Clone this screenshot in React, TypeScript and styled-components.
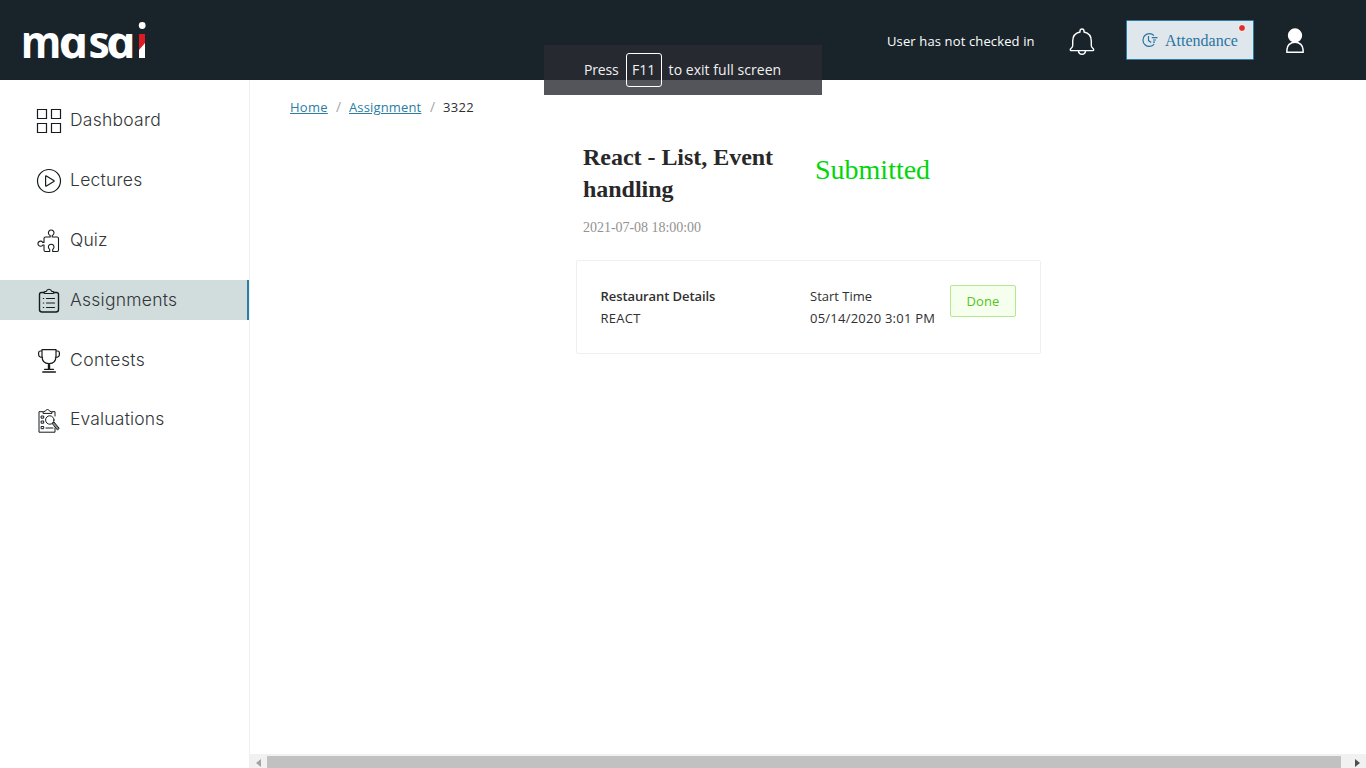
import React from "react";
import styled, { createGlobalStyle } from "styled-components";

const GlobalStyle = createGlobalStyle`
  * { box-sizing: border-box; }
  html, body { margin: 0; height: 100%; overflow: hidden; background: #fff; }
  body { font-family: "Open Sans", "Noto Sans", sans-serif; color: #303030; }
  svg { display: block; flex: none; }
`;

const Page = styled.div`
  position: relative;
  width: 1366px;
  height: 768px;
  display: flex;
  flex-direction: column;
`;

const Header = styled.header`
  height: 80px;
  flex: none;
  display: flex;
  align-items: center;
  background: #19242a;
`;

const HeaderActions = styled.div`
  margin-left: auto;
  display: flex;
  align-items: center;
  padding-right: 61px;
`;

const Label = styled.span<{ $size?: number; $spacing?: number; $weight?: number; $color?: string }>`
  font-size: ${(p) => p.$size ?? 13}px;
  letter-spacing: ${(p) => p.$spacing ?? 0}px;
  font-weight: ${(p) => p.$weight ?? 400};
  color: ${(p) => p.$color ?? "inherit"};
  white-space: nowrap;
`;

const CheckInStatus = styled(Label)`
  width: 148px;
  margin-right: 34px;
  padding-top: 1px;
`;

const AttendanceButton = styled.button`
  position: relative;
  width: 128px;
  height: 40px;
  margin: 0 31px;
  padding: 1px 0 0 14px;
  display: flex;
  align-items: center;
  gap: 7px;
  border: 1px solid #2a7da5;
  border-radius: 1px;
  background: #dfe7ed;
  color: #2a759f;
  font: 16px "Liberation Serif", serif;

  svg { margin-top: -2px; }
`;

const AlertDot = styled.i`
  position: absolute;
  top: 3px;
  right: 7px;
  width: 8px;
  height: 8px;
  border: 1px solid #fff;
  border-radius: 50%;
  background: #dc3030;
`;

const Body = styled.div`
  flex: 1;
  min-height: 0;
  display: flex;
`;

const Sidebar = styled.nav`
  width: 250px;
  flex: none;
  padding-top: 20px;
  display: flex;
  flex-direction: column;
  gap: 20px;
  border-right: 1px solid #efeff3;
`;

const NavItem = styled.a<{ $active?: boolean; $short?: boolean }>`
  height: ${(p) => (p.$short ? 39 : 40)}px;
  display: flex;
  align-items: center;
  padding-left: 36px;
  gap: 8px;
  background: ${(p) => (p.$active ? "#d1dcdd" : "transparent")};
  border-right: 2px solid ${(p) => (p.$active ? "#2a7da5" : "transparent")};
  color: #323638;
  font-family: Inter, sans-serif;

  svg { margin-top: 2px; }
  span { padding-bottom: 2px; }
`;

const Content = styled.main`
  flex: 1;
  min-width: 0;
  display: flex;
  flex-direction: column;
`;

const Breadcrumb = styled.div`
  display: flex;
  padding: 17px 0 0 40px;
  height: 61px;
  line-height: 20px;
`;

const Crumb = styled(Label)<{ $width: number }>`
  width: ${(p) => p.$width}px;
`;

const CrumbLink = styled(Crumb)`
  color: #2a7da5;
  text-decoration: underline;
  text-underline-offset: 1px;
`;

const Slash = styled.span`
  width: 21px;
  text-align: center;
  font-size: 14px;
  color: #a5a5a5;
`;

const Assignment = styled.section`
  width: 465px;
  margin-left: 326px;
`;

const TitleRow = styled.div`
  display: flex;
  padding-left: 7px;
  height: 64px;
  font-family: "Liberation Serif", serif;
`;

const Title = styled.h1`
  width: 232px;
  margin: 0;
  font-size: 24px;
  line-height: 32px;
  font-weight: 700;
  letter-spacing: -0.03px;
  color: #282828;
`;

const Submitted = styled.div`
  font-size: 28px;
  line-height: 58px;
  color: #00d60b;
`;

const Timestamp = styled.div`
  padding: 13px 0 0 7px;
  height: 55px;
  font: 14px/20px "Liberation Serif", serif;
  letter-spacing: -0.03px;
  color: #929292;
`;

const Card = styled.div`
  height: 94px;
  display: flex;
  padding: 24px 0 0 23.5px;
  border: 1px solid #efefef;
  border-radius: 2px;
`;

const CardColumn = styled.div<{ $width: number }>`
  width: ${(p) => p.$width}px;
  display: flex;
  flex-direction: column;
  line-height: 22px;
`;

const DoneButton = styled.button`
  width: 66px;
  height: 32px;
  padding: 0;
  border: 1px solid #b2eb8c;
  border-radius: 2px;
  background: #f6ffed;
  color: #52c41a;
  font-family: inherit;
`;

const ScrollBar = styled.div`
  margin-top: auto;
  height: 14px;
  display: flex;
  align-items: center;
  background: #f1f1f1;
`;

const ScrollThumb = styled.div`
  flex: 1;
  align-self: stretch;
  margin: 2px 0 0;
  background: #c1c1c1;
`;

const ScrollArrow = styled.div<{ $width: number }>`
  width: ${(p) => p.$width}px;
  display: flex;
  justify-content: center;
  padding-top: 3px;
`;

const FullscreenHint = styled.div`
  position: absolute;
  left: 544px;
  top: 45px;
  width: 278px;
  height: 50px;
  display: flex;
  align-items: center;
  padding-left: 40px;
  background: rgba(41, 43, 50, 0.8);
  color: #f0f0f0;

  span { padding-bottom: 1px; }
`;

const KeyCap = styled.span`
  width: 36px;
  height: 34px;
  margin: 0 7px;
  display: flex;
  align-items: center;
  justify-content: center;
  border: 1px solid #fff;
  border-radius: 3px;
`;

const Logo = () => (
  <svg width="150" height="80" fill="#fff" fontFamily="Open Sans" fontWeight="700" fontSize="44">
    <text transform="translate(20.8 58) scale(.94 1)">m</text>
    <text transform="translate(61.3 58) scale(1.15 1) skewX(12)" fontStyle="italic">a</text>
    <text transform="translate(88.5 58) scale(.97 1)">s</text>
    <text transform="translate(108.8 58) scale(1.15 1) skewX(12)" fontStyle="italic">a</text>
    <path d="M139 34h6v24h-6z" />
    <circle cx="142.2" cy="25.5" r="3.4" />
    <path d="M139 34h6v9l-6 7z" fill="#dc1b22" />
  </svg>
);

const Icon = ({ children }: { children: React.ReactNode }) => (
  <svg width="26" height="26" viewBox="0 0 26 26" fill="none" stroke="#171b1d" strokeWidth="1.2" strokeLinejoin="round" strokeLinecap="round">
    {children}
  </svg>
);

const DashboardIcon = () => (
  <Icon><path strokeLinejoin="miter" strokeWidth="1.2" d="M1.500 1.500h9v9h-9zM15.500 1.500h9v9h-9zM1.500 15.500h9v9h-9zM15.500 15.500h9v9h-9z" /></Icon>
);
const LecturesIcon = () => (
  <Icon><circle cx="13" cy="13" r="11.500" /><path d="M9.600 8.400v9.200q0 .8.8.4l7.400-4.400q.8-.6 0-1.100L10.400 8q-.8-.4-.8.4z" /></Icon>
);
const QuizIcon = () => (
  <Icon>
    <path
      strokeWidth="1.100"
      d="M9.500 9h4.700V7.400a2.800 2.800 0 1 1 2 0V9h4.800q1.500 0 1.500 1.500V22q0 1.500-1.500 1.500h-4.300V21.400a2.800 2.800 0 1 0-3 0v2.100H9.500Q8 23.500 8 22v-5H6.800a2.600 2.600 0 1 1 0-2.600H8v-3.900Q8 9 9.500 9z"
    />
  </Icon>
);
const AssignmentsIcon = () => (
  <Icon>
    <path strokeWidth="1.400" d="M8 4.500H5.500q-2 0-2 2v15q0 2.500 2.500 2.500h14q2.500 0 2.500-2.500v-15q0-2-2-2H18" />
    <path d="M8 4.500q0-1.200 2.300-1.200a2.800 2.800 0 0 1 5.400 0Q18 3.300 18 4.500q0 1-1 1H9q-1 0-1-1z" />
    <path d="M10.500 10.500h8M10.500 15h8M10.500 19.500h8M7.300 10.500h.4M7.300 15h.4M7.300 19.500h.4" />
  </Icon>
);
const ContestsIcon = () => (
  <Icon>
    <path d="M6 1.700h14v6q0 8-7 8t-7-8zM6 3H4.500Q2.600 3 2.600 5v1.200q0 3.200 4 3.300M20 3h1.500q1.900 0 1.900 2v1.200q0 3.200-4 3.300M12.400 15.700v5.200M13.600 15.700v5.200M8.500 21.300h9" />
    <path strokeWidth="1.500" d="M6.800 24h12.600" />
  </Icon>
);
const EvaluationsIcon = () => (
  <Icon>
    <g strokeWidth="1">
      <path d="M7 3.700H3v20.500h16V20M16 3.700h3V8" />
      <path d="M7 5V4.200l2.700-1.400a1.900 1.900 0 0 1 3.600 0L16 4.200V5z" />
      <path strokeLinejoin="miter" d="M5.500 8h2.200v2.200H5.500zM5.500 13h2.200v2.200H5.500zM5.500 18.500h2.200v2.200H5.500zM10 20h7" />
      <circle cx="13.800" cy="12" r="4.200" />
      <path fill="#888" d="m16.500 15.300 1.500-1.300 5.200 6.400-1.500 1.300z" />
    </g>
  </Icon>
);
const BellIcon = () => (
  <svg width="26" height="28" viewBox="0 0 26 28" fill="none" stroke="#fff" strokeWidth="1.400" strokeLinejoin="round" style={{ marginTop: 3 }}>
    <path d="M11 4V3a2 2 0 0 1 4 0v1c4.500 1 7.300 4.300 7.300 9v4.500q0 1.600 1.500 2.700 1 .7.900 1.600 0 .8-1 .8H2.300q-1 0-1-.8-.1-.9.900-1.600 1.500-1.100 1.500-2.700V13c0-4.700 2.800-8 7.300-9zM9.300 22.600q.6 3.700 3.700 3.700t3.700-3.700" />
  </svg>
);
const ClockIcon = () => (
  <svg width="17" height="16" viewBox="0 0 17 16" fill="none" stroke="currentColor" strokeWidth="1.200">
    <path d="M13 3.600a6.400 6.400 0 1 0 .2 8.600M7.500 4v4.600l2.700 2M10.800 5.700h5.700M12 8h3M12 10.200h2" />
  </svg>
);
const UserIcon = () => (
  <svg width="20" height="26" viewBox="0 0 20 26" fill="none" stroke="#fff" strokeWidth="1.500" style={{ marginTop: 2 }}>
    <circle cx="10" cy="7.500" r="6.400" fill="#fff" />
    <path d="M1.900 24.200h16.200v-2.400c0-4.300-3.400-7.600-8.100-7.600s-8.100 3.300-8.100 7.600z" />
  </svg>
);

const navigation = [
  { name: "Dashboard", icon: <DashboardIcon />, spacing: 0.25 },
  { name: "Lectures", icon: <LecturesIcon />, spacing: 0.25 },
  { name: "Quiz", icon: <QuizIcon />, spacing: 0.1 },
  { name: "Assignments", icon: <AssignmentsIcon />, spacing: 0.25, active: true },
  { name: "Contests", icon: <ContestsIcon />, spacing: 0.45 },
  { name: "Evaluations", icon: <EvaluationsIcon />, spacing: 0.17, short: true },
];

export default function App() {
  return (
    <Page>
      <GlobalStyle />
      <Header>
        <Logo />
        <HeaderActions>
          <CheckInStatus $color="#fff" $spacing={0.13}>User has not checked in</CheckInStatus>
          <BellIcon />
          <AttendanceButton>
            <ClockIcon />
            Attendance
            <AlertDot />
          </AttendanceButton>
          <UserIcon />
        </HeaderActions>
      </Header>
      <Body>
        <Sidebar>
          {navigation.map((item) => (
            <NavItem key={item.name} $active={item.active} $short={item.short}>
              {item.icon}
              <Label $size={17.5} $weight={300} $spacing={item.spacing}>{item.name}</Label>
            </NavItem>
          ))}
        </Sidebar>
        <Content>
          <Breadcrumb>
            <CrumbLink $width={38} $spacing={0.25}>Home</CrumbLink>
            <Slash>/</Slash>
            <CrumbLink $width={73} $spacing={0.15}>Assignment</CrumbLink>
            <Slash>/</Slash>
            <Crumb $width={32} $spacing={0.35}>3322</Crumb>
          </Breadcrumb>
          <Assignment>
            <TitleRow>
              <Title>React - List, Event handling</Title>
              <Submitted>Submitted</Submitted>
            </TitleRow>
            <Timestamp>2021-07-08 18:00:00</Timestamp>
            <Card>
              <CardColumn $width={209.5}>
                <Label $weight={600} $spacing={-0.08}>Restaurant Details</Label>
                <Label $spacing={0.25}>REACT</Label>
              </CardColumn>
              <CardColumn $width={140}>
                <Label>Start Time</Label>
                <Label $spacing={0.23}>05/14/2020 3:01 PM</Label>
              </CardColumn>
              <DoneButton><Label $weight={500} $spacing={0.1}>Done</Label></DoneButton>
            </Card>
          </Assignment>
          <ScrollBar>
            <ScrollArrow $width={17}>
              <svg width="5" height="8"><path d="M5 0v8L0 4z" fill="#a3a3a3" /></svg>
            </ScrollArrow>
            <ScrollThumb />
            <ScrollArrow $width={25}>
              <svg width="5" height="8" style={{ marginLeft: 8 }}><path d="M0 0v8l5-4z" fill="#505050" /></svg>
            </ScrollArrow>
          </ScrollBar>
        </Content>
      </Body>
      <FullscreenHint>
        <Label $size={14} $spacing={-0.15}>Press</Label>
        <KeyCap><Label $size={14}>F11</Label></KeyCap>
        <Label $size={14} $spacing={0.04}>to exit full screen</Label>
      </FullscreenHint>
    </Page>
  );
}
